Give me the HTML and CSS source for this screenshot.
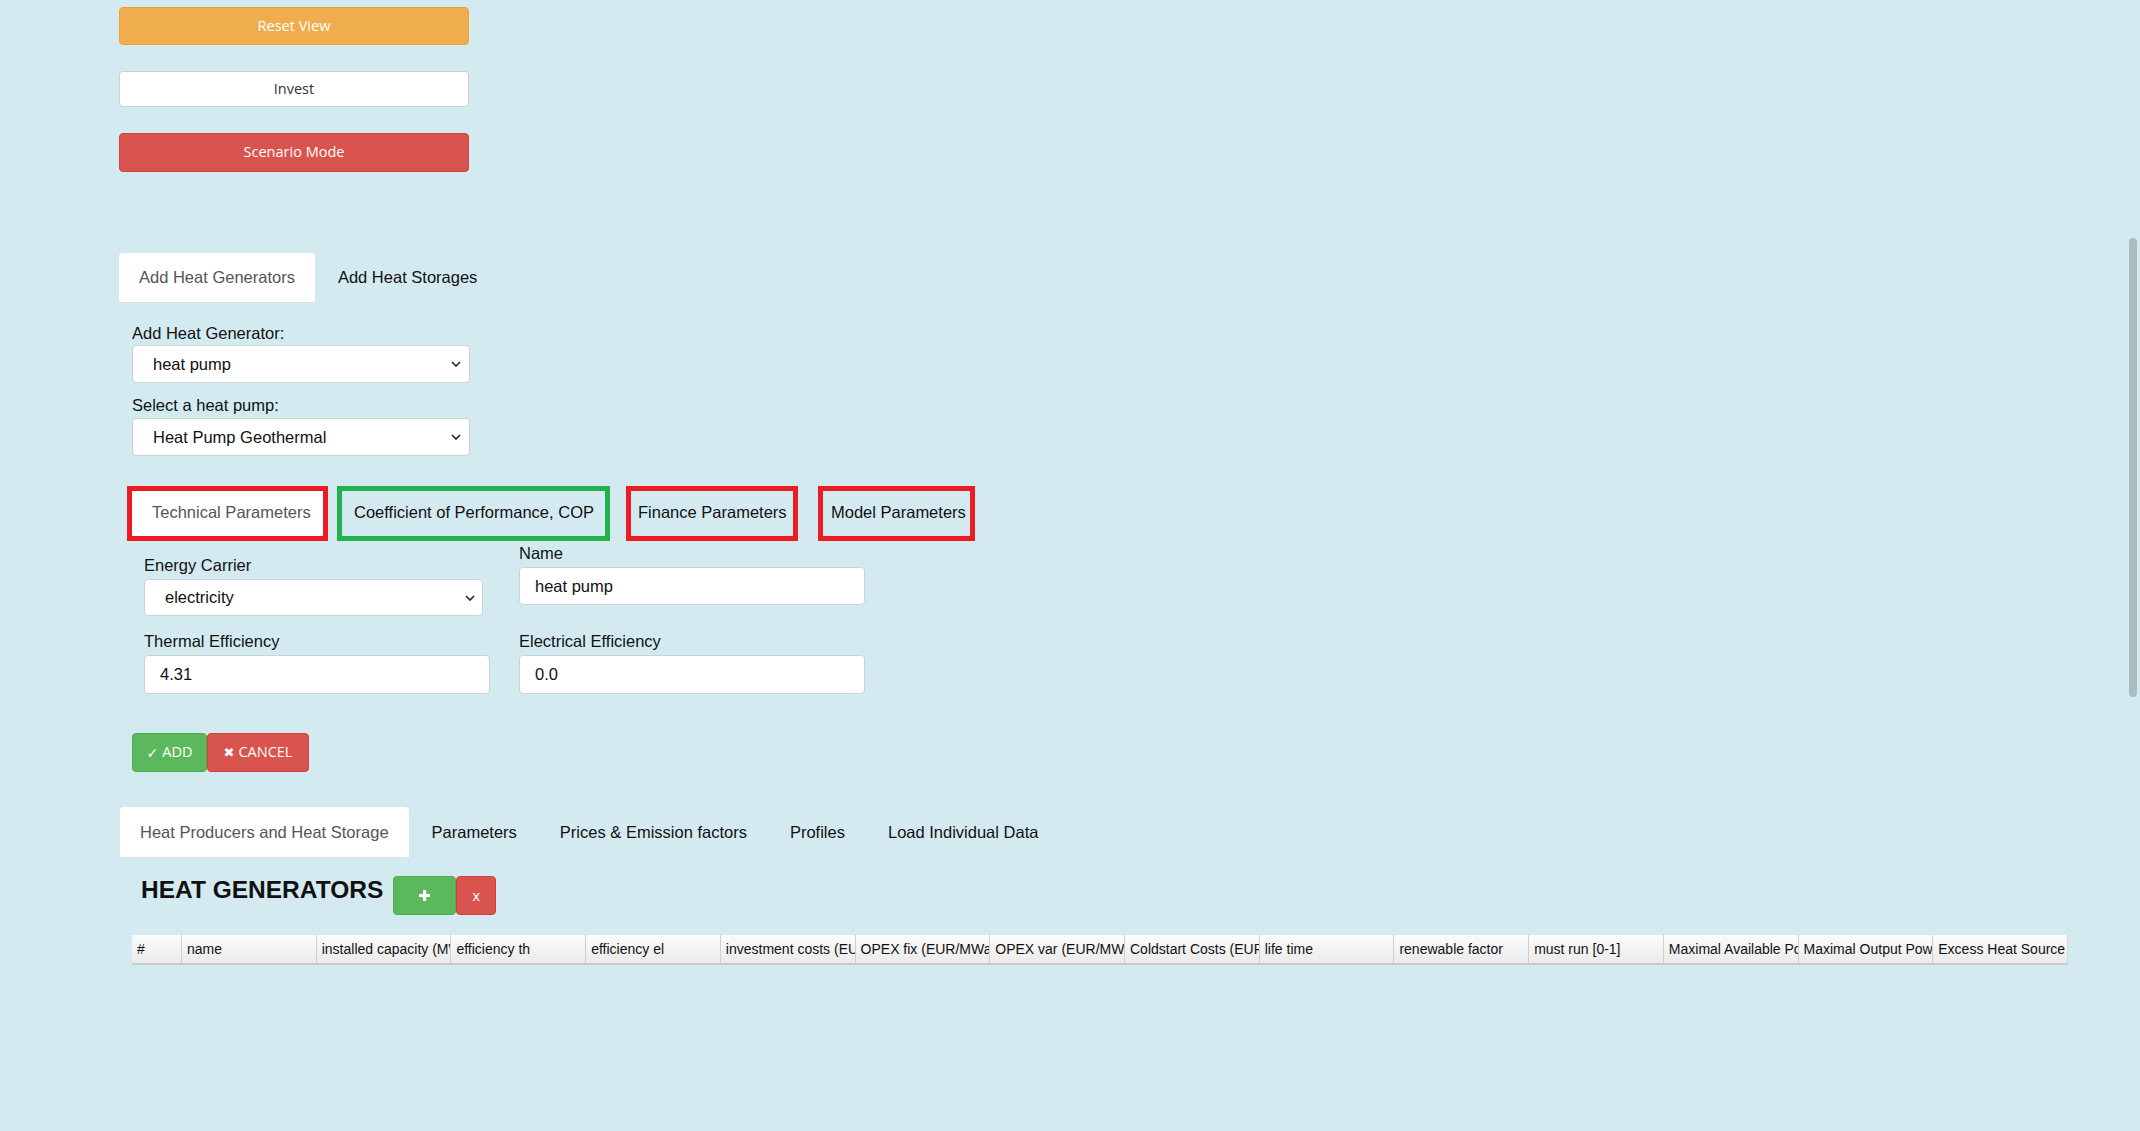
FILE: index.html
```html
<!DOCTYPE html>
<html lang="en">
<head>
<meta charset="utf-8">
<title>Heat Generators</title>
<link rel="stylesheet" href="styles.css">
</head>
<body>
<div class="page">
  <div class="actions">
    <button class="btn btn-warning btn-wide">Reset View</button>
    <button class="btn btn-default btn-wide btn-invest">Invest</button>
    <button class="btn btn-danger btn-wide btn-scenario">Scenario Mode</button>
  </div>

  <ul class="tabs tabs-top">
    <li class="tab active">Add Heat Generators</li>
    <li class="tab">Add Heat Storages</li>
  </ul>

  <div class="gen-form">
    <label class="lbl">Add Heat Generator:</label>
    <div class="select select-main"><span>heat pump</span><svg class="chev" viewBox="0 0 10 6"><path d="M1 1 L5 5 L9 1" fill="none" stroke="#222" stroke-width="1.6"/></svg></div>
    <label class="lbl lbl-second">Select a heat pump:</label>
    <div class="select select-main select-second"><span>Heat Pump Geothermal</span><svg class="chev" viewBox="0 0 10 6"><path d="M1 1 L5 5 L9 1" fill="none" stroke="#222" stroke-width="1.6"/></svg></div>
  </div>

  <ul class="subtabs">
    <li class="subtab st-tech subtab-active">Technical Parameters</li>
    <li class="subtab st-cop">Coefficient of Performance, COP</li>
    <li class="subtab st-fin">Finance Parameters</li>
    <li class="subtab st-model">Model Parameters</li>
  </ul>

  <div class="params">
    <div class="field field-low">
      <label>Energy Carrier</label>
      <div class="select select-field"><span>electricity</span><svg class="chev" viewBox="0 0 10 6"><path d="M1 1 L5 5 L9 1" fill="none" stroke="#222" stroke-width="1.6"/></svg></div>
    </div>
    <div class="field">
      <label>Name</label>
      <div class="input">heat pump</div>
    </div>
    <div class="field">
      <label>Thermal Efficiency</label>
      <div class="input input-tall">4.31</div>
    </div>
    <div class="field">
      <label>Electrical Efficiency</label>
      <div class="input input-tall">0.0</div>
    </div>
  </div>

  <div class="form-actions">
    <button class="btn btn-success btn-add"><span class="glyph">✓</span> ADD</button>
    <button class="btn btn-danger btn-cancel"><span class="glyph glyph-x">✖</span> CANCEL</button>
  </div>

  <ul class="tabs tabs-bottom">
    <li class="tab active">Heat Producers and Heat Storage</li>
    <li class="tab">Parameters</li>
    <li class="tab">Prices &amp; Emission factors</li>
    <li class="tab">Profiles</li>
    <li class="tab">Load Individual Data</li>
  </ul>

  <div class="gen-head">
    <h2 class="gen-title">HEAT GENERATORS</h2>
    <button class="btn btn-success btn-plus"><svg class="plus" viewBox="0 0 11 11"><rect x="4" y="0" width="3.2" height="11" fill="#fff"/><rect x="0" y="3.9" width="11" height="3.2" fill="#fff"/></svg></button>
    <button class="btn btn-danger btn-del">x</button>
  </div>

  <div class="grid-head">
    <div class="th">#</div>
    <div class="th">name</div>
    <div class="th">installed capacity (MW)</div>
    <div class="th">efficiency th</div>
    <div class="th">efficiency el</div>
    <div class="th">investment costs (EUR/MW)</div>
    <div class="th">OPEX fix (EUR/MWa)</div>
    <div class="th">OPEX var (EUR/MWh)</div>
    <div class="th">Coldstart Costs (EUR)</div>
    <div class="th">life time</div>
    <div class="th">renewable factor</div>
    <div class="th">must run [0-1]</div>
    <div class="th">Maximal Available Power</div>
    <div class="th">Maximal Output Power</div>
    <div class="th th-last">Excess Heat Source</div>
  </div>
</div>
<div class="scroll-thumb"></div>
</body>
</html>
```

FILE: styles.css
```css
* { box-sizing: border-box; }
html, body { margin: 0; padding: 0; }
body {
  background: #d3ebf0;
  font-family: "Liberation Sans", Arial, sans-serif;
  color: #111;
  overflow: hidden;
}
.page { padding: 7px 0 0 119px; }

/* buttons */
.btn {
  font-family: "Open Sans", "Liberation Sans", sans-serif;
  font-size: 14px;
  border: 1px solid transparent;
  border-radius: 4px;
  display: inline-flex;
  align-items: center;
  justify-content: center;
  padding: 0;
  line-height: 1;
  cursor: pointer;
}
.btn-warning { background: #f0ad4e; border-color: #eea236; color: #fff; }
.btn-default { background: #fff; border-color: #cfcfcf; color: #333; }
.btn-danger { background: #d9534f; border-color: #d43f3a; color: #fff; }
.btn-success { background: #5cb85c; border-color: #4cae4c; color: #fff; }

.actions { display: flex; flex-direction: column; gap: 26px; width: 350px; }
.btn-wide { width: 350px; height: 38px; font-size: 14.5px; }
.btn-invest { height: 36px; }
.btn-scenario { height: 39px; }

/* main tabs */
.tabs {
  list-style: none;
  margin: 0;
  padding: 0;
  display: flex;
  border-bottom: 1px solid #dce2e4;
  font-size: 16.5px;
}
.tab {
  height: 49px;
  padding: 0 20px;
  margin-right: 3px;
  display: flex;
  align-items: center;
  color: #111;
  white-space: nowrap;
  border-radius: 4px 4px 0 0;
}
.tab.active { background: #fff; color: #555; }
.tabs-top { margin-top: 81px; width: 1902px; }
.tabs-bottom { margin-top: 35px; margin-left: 1px; width: 1901px; }
.tabs-bottom .tab { height: 50px; }

/* generator form */
.gen-form { padding-left: 13px; margin-top: 20px; display: flex; flex-direction: column; align-items: flex-start; }
.lbl { display: block; font-size: 16.5px; line-height: 20px; color: #111; }
.lbl-second { margin-top: 12px; }

.select, .input {
  background: #fff;
  border: 1px solid #cdd2d4;
  border-radius: 4px;
  display: flex;
  align-items: center;
  font-size: 16.5px;
  color: #111;
  white-space: nowrap;
}
.select { justify-content: space-between; padding: 0 8px 0 20px; }
.select-main { width: 338px; height: 38px; margin-top: 2px; }
.select-second { margin-top: 3px; }
.chev { width: 10px; height: 6px; flex: none; }
.input { padding: 0 15px; height: 38px; }
.input-tall { height: 39px; }

/* annotated sub tabs */
.subtabs {
  list-style: none;
  margin: 30px 0 0 8px;
  padding: 0;
  display: flex;
  align-items: flex-start;
  width: 1004px;
  height: 52px;
  border-bottom: 1px solid #dce2e4;
  font-size: 16.5px;
}
.subtab {
  flex: none;
  height: 55px;
  border: 5px solid #ed1c24;
  padding-bottom: 3px;
  display: flex;
  align-items: center;
  color: #111;
  white-space: nowrap;
}
.subtab-active { background: #fff; color: #555; }
.st-tech { width: 201px; padding-left: 20px; margin-right: 9px; }
.st-cop { width: 273px; padding-left: 12px; margin-right: 16px; border-color: #22b14c; }
.st-fin { width: 172px; padding-left: 7px; margin-right: 20px; }
.st-model { width: 157px; padding-left: 8px; }

/* parameter fields */
.params {
  margin: 5px 0 0 25px;
  display: grid;
  grid-template-columns: 346px 346px;
  column-gap: 29px;
  row-gap: 15px;
  align-items: start;
}
.field { display: flex; flex-direction: column; gap: 4px; }
.field label { font-size: 16.5px; line-height: 20px; color: #111; }
.field-low { padding-top: 12px; }
.select-field { width: 339px; height: 37px; padding: 0 7px 0 20px; }

/* add / cancel */
.form-actions { margin-top: 39px; padding-left: 13px; display: flex; }
.btn-add, .btn-cancel { height: 39px; font-size: 14.5px; }
.btn-add { width: 75px; }
.btn-cancel { width: 102px; }
.glyph { font-family: "DejaVu Sans", sans-serif; font-size: 14px; margin-right: 4px; }
.glyph-x { font-size: 13px; }

/* heat generators heading */
.gen-head { margin-top: 18px; padding-left: 22px; display: flex; align-items: flex-start; }
.gen-title {
  margin: 0 10px 0 0;
  font-size: 24.5px;
  line-height: 28px;
  font-weight: bold;
  color: #111;
}
.btn-plus, .btn-del { height: 39px; }
.btn-plus { width: 63px; }
.btn-del { width: 40px; font-family: "Liberation Sans", Arial, sans-serif; font-size: 15px; padding-bottom: 1px; }
.plus { width: 11px; height: 11px; }

/* table header */
.grid-head {
  margin: 20px 0 0 13px;
  width: 1936px;
  height: 30px;
  display: grid;
  grid-template-columns: 50px repeat(14, 1fr);
  background: linear-gradient(#fbfbfb, #ebebeb);
  border-bottom: 2px solid #c9c9c9;
  font-size: 14px;
  color: #111;
}
.th {
  border-right: 1px solid #cfcfcf;
  padding-left: 5px;
  white-space: nowrap;
  overflow: hidden;
  display: flex;
  align-items: center;
}
.th-last { border-right: 1px solid #d8d8d8; }

/* overlay scrollbar */
.scroll-thumb {
  position: fixed;
  left: 2129px;
  top: 238px;
  width: 8px;
  height: 459px;
  border-radius: 4px;
  background: #a9bcbf;
}
```
